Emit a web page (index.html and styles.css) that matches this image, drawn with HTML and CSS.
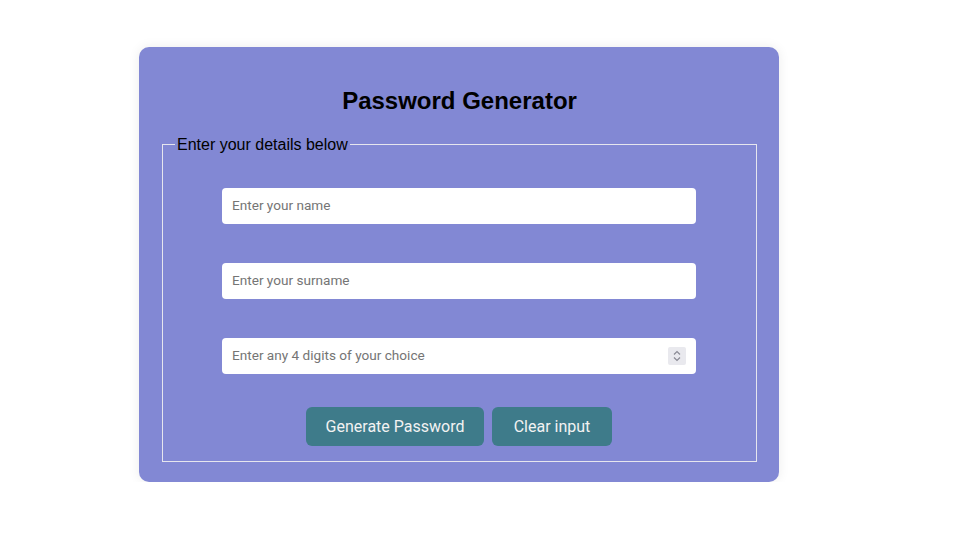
FILE: index.html
```html
<!DOCTYPE html>
<html lang="en">
<head>
<meta charset="utf-8">
<title>Password Generator</title>
<link rel="stylesheet" href="styles.css">
</head>
<body>
<div class="card">
  <h1 class="title">Password Generator</h1>
  <fieldset class="details">
    <legend class="legend">Enter your details below</legend>
    <div class="fields">
      <input class="field" type="text" placeholder="Enter your name">
      <input class="field" type="text" placeholder="Enter your surname">
      <div class="num-wrap">
        <input class="field field-num" type="number" placeholder="Enter any 4 digits of your choice">
        <span class="spinner" aria-hidden="true">
          <svg width="18" height="18" viewBox="0 0 18 18">
            <path d="M6 7.5 L9 4.5 L12 7.5" fill="none" stroke="#8a8a94" stroke-width="1.2"/>
            <path d="M6 10.5 L9 13.5 L12 10.5" fill="none" stroke="#8a8a94" stroke-width="1.2"/>
          </svg>
        </span>
      </div>
    </div>
    <div class="actions">
      <button class="btn btn-generate" type="button">Generate Password</button>
      <button class="btn btn-clear" type="button">Clear input</button>
    </div>
  </fieldset>
</div>
</body>
</html>
```
FILE: styles.css
```css
html, body {
  margin: 0;
  padding: 0;
  background: #ffffff;
}
body {
  font-family: "Liberation Sans", Arial, sans-serif;
}
.card {
  box-sizing: border-box;
  width: 640px;
  height: 435px;
  margin: 47px 0 0 139px;
  padding: 40px 22px 20px 23px;
  background: #8288d4;
  border-radius: 10px;
  box-shadow: 0 0 12px rgba(0, 0, 0, 0.08);
}
.title {
  margin: 0;
  font-size: 24px;
  line-height: 28px;
  font-weight: bold;
  text-align: center;
  color: #000;
}
.details {
  margin: 19px 0 0 0;
  padding: 0 13px 15px 12px;
  border: 1px solid #e6e6ee;
  min-width: 0;
}
.legend {
  padding: 1px 2px 0;
  font-size: 16px;
  line-height: 19px;
  color: #000;
}
.fields {
  display: flex;
  flex-direction: column;
  align-items: center;
  gap: 39px;
  margin-top: 34px;
}
.num-wrap {
  position: relative;
  width: 474px;
  height: 36px;
}
.field {
  box-sizing: border-box;
  width: 474px;
  height: 36px;
  margin: 0;
  padding: 0 10px 2px;
  border: none;
  border-radius: 4px;
  background: #ffffff;
  font-family: "Roboto", "Open Sans", sans-serif;
  font-size: 13.6px;
  color: #333;
  outline: none;
  display: block;
}
.field::placeholder {
  color: #757575;
}
.field-num {
  -moz-appearance: textfield;
  appearance: textfield;
  padding-right: 36px;
}
.field-num::-webkit-inner-spin-button,
.field-num::-webkit-outer-spin-button {
  -webkit-appearance: none;
  margin: 0;
}
.spinner {
  position: absolute;
  top: 9px;
  right: 10px;
  width: 18px;
  height: 18px;
  background: #e9e9ee;
  border-radius: 2px;
  display: flex;
  pointer-events: none;
}
.actions {
  display: flex;
  justify-content: center;
  gap: 8px;
  margin-top: 33px;
}
.btn {
  height: 39px;
  padding: 0;
  border: none;
  border-radius: 6px;
  background: #3e7b8a;
  color: #f2f2f2;
  font-family: "Roboto", "Open Sans", sans-serif;
  font-size: 16px;
  text-align: center;
  cursor: pointer;
}
.btn-generate {
  width: 178px;
}
.btn-clear {
  width: 120px;
}
```
